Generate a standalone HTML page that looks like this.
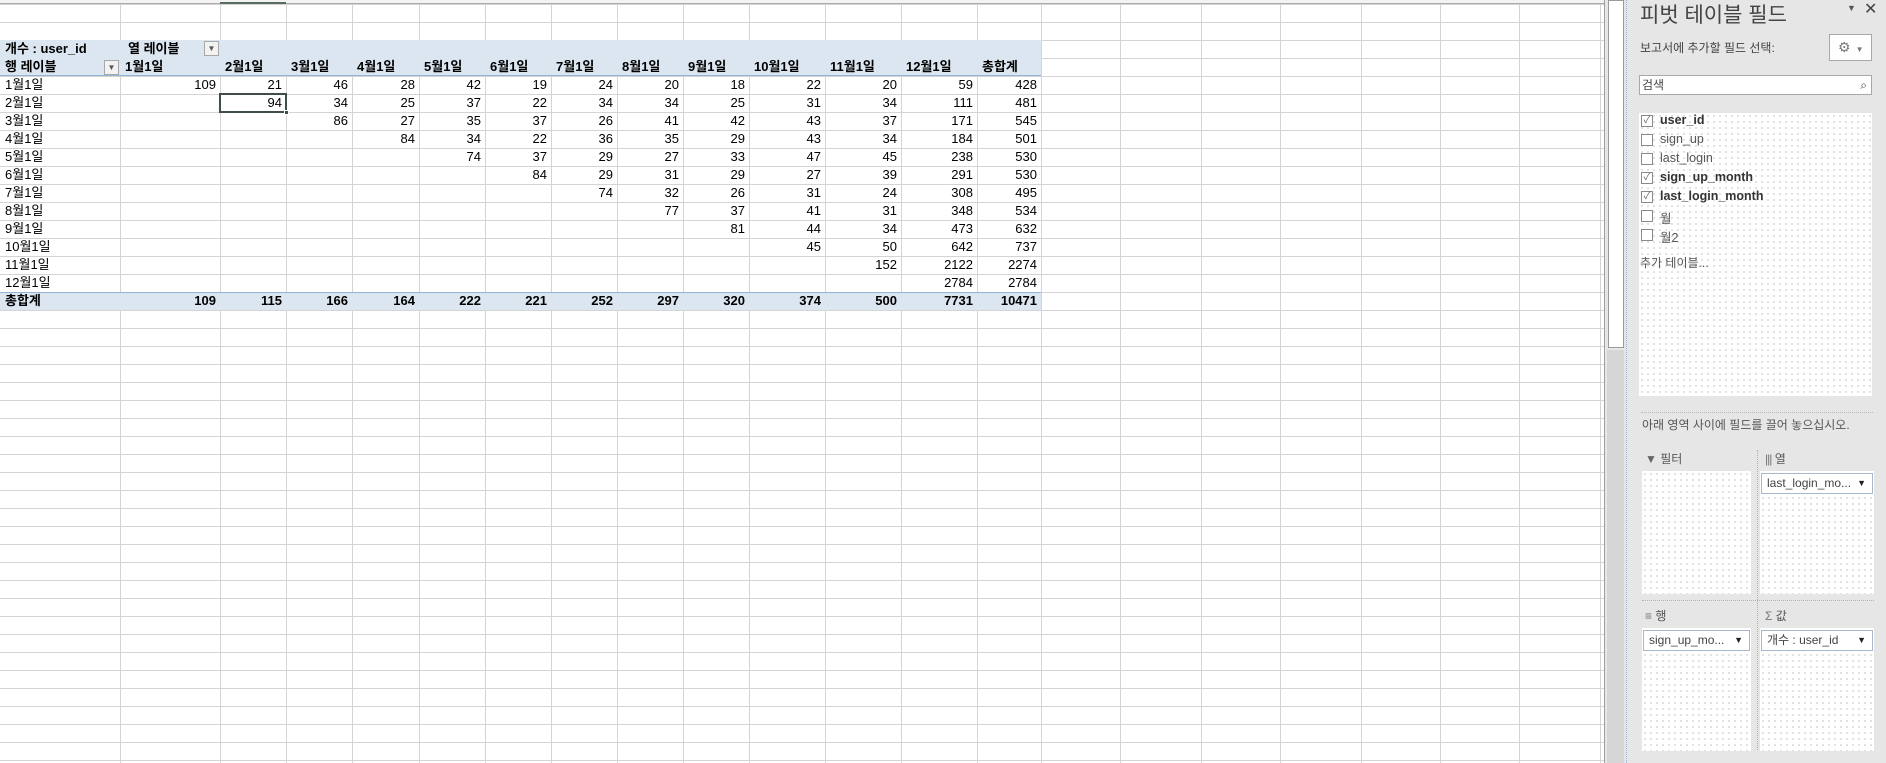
<!DOCTYPE html>
<html><head><meta charset="utf-8">
<style>
*{margin:0;padding:0;box-sizing:border-box}
body{width:1886px;height:763px;overflow:hidden;background:#fff;position:relative;font-family:"Liberation Sans","Noto Sans CJK KR",sans-serif;font-size:13px;color:#000}
.abs{position:absolute}
.hl{position:absolute;left:0;top:4px;width:1604px;height:759px;background:repeating-linear-gradient(to bottom,#d4d4d4 0,#d4d4d4 1px,transparent 1px,transparent 18px)}
.vl{position:absolute;top:0;width:1px;height:763px;background:#d4d4d4}
.row{position:absolute;left:0;height:18px;display:flex;line-height:18px;white-space:nowrap}
.row div{flex:none;text-align:right;padding-right:4px;overflow:visible}
.row div:nth-child(1){width:120px;text-align:left;padding-left:5px}
.row div:nth-child(2){width:100px}
.row div:nth-child(3),.row div:nth-child(4),.row div:nth-child(6),.row div:nth-child(7),.row div:nth-child(8),.row div:nth-child(9),.row div:nth-child(10){width:66px}
.row div:nth-child(5){width:67px}
.row div:nth-child(11),.row div:nth-child(12),.row div:nth-child(13){width:76px}
.row div:nth-child(14){width:64px}
.b{font-weight:bold}
.hdr div{text-align:left;padding-left:5px}
.dd{position:absolute;width:15px;height:15px;border:1px solid #a8a8a8;background:#f2f2f2;font-size:8px;line-height:13px;text-align:center;color:#555}
.panel{position:absolute;left:1627px;top:0;width:259px;height:763px;background:#e6e6e6;color:#444}
.dots{background-color:#fff;background-image:radial-gradient(#d8d8d8 0.8px,transparent 0.9px);background-size:6px 6px}
.cb{position:absolute;left:14px;width:12px;height:12px;border:1px solid #8a8a8a;background:#fff;font-size:10px;line-height:10px;text-align:center;color:#666}
.fl{position:absolute;left:33px;font-size:12.5px;color:#555}
.fb{position:absolute;height:21px;border:1px solid #a7b7cc;background:#fff;font-size:12px;line-height:19px;padding-left:5px;color:#444}
.fb span{position:absolute;right:6px;top:0;font-size:9px;color:#222}
</style></head><body>
<div class="hl"></div>
<div class="vl" style="left:120px"></div><div class="vl" style="left:220px"></div><div class="vl" style="left:286px"></div><div class="vl" style="left:352px"></div><div class="vl" style="left:419px"></div><div class="vl" style="left:485px"></div><div class="vl" style="left:551px"></div><div class="vl" style="left:617px"></div><div class="vl" style="left:683px"></div><div class="vl" style="left:749px"></div><div class="vl" style="left:825px"></div><div class="vl" style="left:901px"></div><div class="vl" style="left:977px"></div><div class="vl" style="left:1041px"></div><div class="vl" style="left:1120px"></div><div class="vl" style="left:1201px"></div><div class="vl" style="left:1280px"></div><div class="vl" style="left:1361px"></div><div class="vl" style="left:1440px"></div><div class="vl" style="left:1519px"></div><div class="vl" style="left:1600px"></div>
<div class="abs" style="left:0;top:0;width:1604px;height:4px;background:#f3f3f3;border-bottom:1px solid #ababab"></div>
<div class="abs" style="left:220px;top:2px;width:66px;height:2px;background:#5a6b60"></div>
<!-- pivot bands -->
<div class="abs" style="left:0;top:40px;width:1041px;height:36px;background:#dce6f1;border-bottom:1px solid #95b3d7"></div>
<div class="abs" style="left:0;top:292px;width:1041px;height:18px;background:#dce6f1;border-top:1px solid #95b3d7"></div>

<div class="row b" style="top:40px"><div>개수 : user_id</div><div style="text-align:left;padding-left:8px">열 레이블</div></div>
<div class="dd" style="left:204px;top:41px">▼</div>
<div class="row b hdr" style="top:58px"><div>행 레이블</div><div>1월1일</div><div>2월1일</div><div>3월1일</div><div>4월1일</div><div>5월1일</div><div>6월1일</div><div>7월1일</div><div>8월1일</div><div>9월1일</div><div>10월1일</div><div>11월1일</div><div>12월1일</div><div>총합계</div></div>
<div class="dd" style="left:104px;top:60px">▼</div>

<div class="row" style="top:76px"><div>1월1일</div><div>109</div><div>21</div><div>46</div><div>28</div><div>42</div><div>19</div><div>24</div><div>20</div><div>18</div><div>22</div><div>20</div><div>59</div><div>428</div></div>
<div class="row" style="top:94px"><div>2월1일</div><div></div><div>94</div><div>34</div><div>25</div><div>37</div><div>22</div><div>34</div><div>34</div><div>25</div><div>31</div><div>34</div><div>111</div><div>481</div></div>
<div class="row" style="top:112px"><div>3월1일</div><div></div><div></div><div>86</div><div>27</div><div>35</div><div>37</div><div>26</div><div>41</div><div>42</div><div>43</div><div>37</div><div>171</div><div>545</div></div>
<div class="row" style="top:130px"><div>4월1일</div><div></div><div></div><div></div><div>84</div><div>34</div><div>22</div><div>36</div><div>35</div><div>29</div><div>43</div><div>34</div><div>184</div><div>501</div></div>
<div class="row" style="top:148px"><div>5월1일</div><div></div><div></div><div></div><div></div><div>74</div><div>37</div><div>29</div><div>27</div><div>33</div><div>47</div><div>45</div><div>238</div><div>530</div></div>
<div class="row" style="top:166px"><div>6월1일</div><div></div><div></div><div></div><div></div><div></div><div>84</div><div>29</div><div>31</div><div>29</div><div>27</div><div>39</div><div>291</div><div>530</div></div>
<div class="row" style="top:184px"><div>7월1일</div><div></div><div></div><div></div><div></div><div></div><div></div><div>74</div><div>32</div><div>26</div><div>31</div><div>24</div><div>308</div><div>495</div></div>
<div class="row" style="top:202px"><div>8월1일</div><div></div><div></div><div></div><div></div><div></div><div></div><div></div><div>77</div><div>37</div><div>41</div><div>31</div><div>348</div><div>534</div></div>
<div class="row" style="top:220px"><div>9월1일</div><div></div><div></div><div></div><div></div><div></div><div></div><div></div><div></div><div>81</div><div>44</div><div>34</div><div>473</div><div>632</div></div>
<div class="row" style="top:238px"><div>10월1일</div><div></div><div></div><div></div><div></div><div></div><div></div><div></div><div></div><div></div><div>45</div><div>50</div><div>642</div><div>737</div></div>
<div class="row" style="top:256px"><div>11월1일</div><div></div><div></div><div></div><div></div><div></div><div></div><div></div><div></div><div></div><div></div><div>152</div><div>2122</div><div>2274</div></div>
<div class="row" style="top:274px"><div>12월1일</div><div></div><div></div><div></div><div></div><div></div><div></div><div></div><div></div><div></div><div></div><div></div><div>2784</div><div>2784</div></div>
<div class="row b" style="top:292px"><div>총합계</div><div>109</div><div>115</div><div>166</div><div>164</div><div>222</div><div>221</div><div>252</div><div>297</div><div>320</div><div>374</div><div>500</div><div>7731</div><div>10471</div></div>

<div class="abs" style="left:219px;top:93px;width:68px;height:20px;border:2px solid #3f4f48"></div>
<div class="abs" style="left:284px;top:110px;width:5px;height:5px;background:#3f4f48;border:1px solid #fff"></div>

<!-- scrollbar -->
<div class="abs" style="left:1604px;top:0;width:23px;height:763px;background:#e6e6e6;border-left:1px solid #a0a0a0"></div>
<div class="abs" style="left:1608px;top:0;width:16px;height:348px;background:#fff;border:1px solid #9a9a9a"></div>
<div class="abs" style="left:1607px;top:350px;width:17px;height:413px;background:#d6d6d6"></div>
<div class="abs" style="left:1626px;top:0;width:1px;height:763px;border-left:1px dotted #9ab4d6"></div>

<div class="panel">
 <div class="abs" style="left:13px;top:-1px;font-size:21px;color:#444">피벗 테이블 필드</div>
 <div class="abs" style="left:220px;top:3px;font-size:9px;color:#555">▼</div>
 <div class="abs" style="left:237px;top:-1px;font-size:16px;color:#444">✕</div>
 <div class="abs" style="left:13px;top:39px;font-size:12px;color:#444">보고서에 추가할 필드 선택:</div>
 <div class="abs" style="left:202px;top:34px;width:43px;height:27px;border:1px solid #a8a8a8;background:#fff;font-size:14px;line-height:24px;padding-left:8px;color:#777">⚙<span style="font-size:8px;margin-left:5px">▼</span></div>
 <div class="abs" style="left:12px;top:75px;width:233px;height:20px;border:1px solid #a8a8a8;background:#fff;font-size:12px;line-height:18px;padding-left:2px;color:#444">검색<span style="position:absolute;right:4px;top:0;font-size:12px;color:#444">⌕</span></div>
 <div class="abs dots" style="left:12px;top:113px;width:233px;height:283px"></div>
 <div class="cb" style="top:115px">✓</div><div class="fl b" style="top:113px;color:#333">user_id</div>
 <div class="cb" style="top:134px"></div><div class="fl" style="top:132px">sign_up</div>
 <div class="cb" style="top:153px"></div><div class="fl" style="top:151px">last_login</div>
 <div class="cb" style="top:172px">✓</div><div class="fl b" style="top:170px;color:#333">sign_up_month</div>
 <div class="cb" style="top:191px">✓</div><div class="fl b" style="top:189px;color:#333">last_login_month</div>
 <div class="cb" style="top:210px"></div><div class="fl" style="top:208px">월</div>
 <div class="cb" style="top:229px"></div><div class="fl" style="top:227px">월2</div>
 <div class="abs" style="left:13px;top:254px;font-size:12px;color:#555">추가 테이블...</div>
 <div class="abs" style="left:14px;top:412px;width:232px;border-top:1px dotted #b8b8b8"></div>
 <div class="abs" style="left:15px;top:416px;font-size:12px;color:#555">아래 영역 사이에 필드를 끌어 놓으십시오.</div>
 <div class="abs" style="left:18px;top:450px;font-size:12px;color:#555"><span style="color:#666">▼</span> 필터</div>
 <div class="abs" style="left:138px;top:450px;font-size:12px;color:#555"><span style="color:#777;letter-spacing:-1px">|||</span> 열</div>
 <div class="abs dots" style="left:15px;top:471px;width:109px;height:123px"></div>
 <div class="abs dots" style="left:133px;top:471px;width:114px;height:123px"></div>
 <div class="fb" style="left:134px;top:473px;width:112px">last_login_mo...<span>▼</span></div>
 <div class="abs" style="left:130px;top:450px;height:300px;border-left:1px dotted #9ab4d6"></div>
 <div class="abs" style="left:15px;top:600px;width:232px;border-top:1px dotted #9ab4d6"></div>
 <div class="abs" style="left:18px;top:607px;font-size:12px;color:#555"><span style="color:#777">≡</span> 행</div>
 <div class="abs" style="left:138px;top:607px;font-size:12px;color:#555"><span style="color:#777">Σ</span> 값</div>
 <div class="abs dots" style="left:15px;top:628px;width:109px;height:123px"></div>
 <div class="abs dots" style="left:133px;top:628px;width:114px;height:123px"></div>
 <div class="fb" style="left:16px;top:630px;width:107px">sign_up_mo...<span>▼</span></div>
 <div class="fb" style="left:134px;top:630px;width:112px">개수 : user_id<span>▼</span></div>
</div>
</body></html>
